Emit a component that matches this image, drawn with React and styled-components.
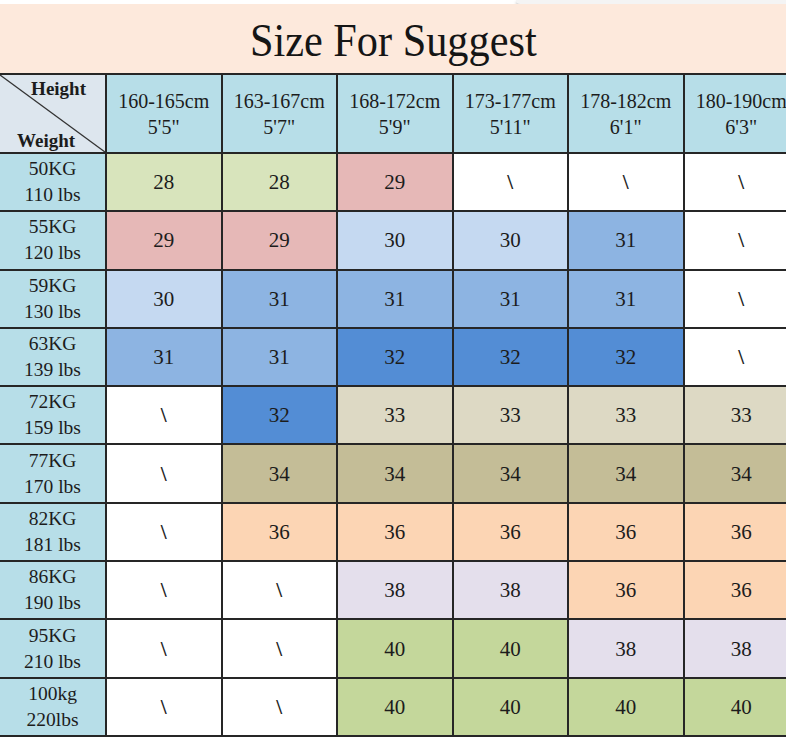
import styled, { createGlobalStyle } from "styled-components";

const SERIF = `"Liberation Serif", "Times New Roman", "DejaVu Serif", serif`;

const GlobalStyle = createGlobalStyle`
  html, body {
    margin: 0;
    padding: 0;
    background: #ffffff;
  }
  body {
    width: 786px;
    height: 743px;
    overflow: hidden;
    font-family: ${SERIF};
    color: #1c1c1c;
  }
`;

const Page = styled.div`
  width: 786px;
  height: 743px;
  overflow: hidden;
  display: flex;
  flex-direction: column;
  font-family: ${SERIF};
`;

const TopStrip = styled.div`
  height: 4px;
  display: flex;
  justify-content: flex-end;
  background: #ffffff;
`;

const PopupEdge = styled.div`
  width: 270px;
  height: 4px;
  background: #f4f4f4;
  border-bottom-left-radius: 6px;
  box-shadow: 0 2px 3px rgba(0, 0, 0, 0.25);
`;

const TitleBand = styled.div`
  height: 69px;
  background: #fde9dc;
  display: flex;
  align-items: center;
  justify-content: center;
`;

const Title = styled.h1`
  margin: 0;
  font-family: ${SERIF};
  font-weight: normal;
  font-size: 47px;
  line-height: 1;
  color: #151515;
  transform: scaleX(0.9);
  padding-top: 3px;
`;

const Table = styled.div`
  display: grid;
  grid-template-columns: 105px repeat(6, 113.5px);
  grid-template-rows: 77px repeat(10, 56.3px);
  gap: 2px;
  background: #262626;
  border-top: 2px solid #262626;
  border-bottom: 2px solid #262626;
  width: max-content;
`;

const Cell = styled.div`
  background: ${(p) => p.$bg || "#ffffff"};
  display: flex;
  flex-direction: column;
  align-items: center;
  justify-content: center;
  font-family: ${SERIF};
  font-size: ${(p) => (p.$head ? p.$head : "21px")};
  font-weight: ${(p) => (p.$empty ? "bold" : "normal")};
  line-height: 26px;
  text-align: center;
  white-space: nowrap;
  color: #1c1c1c;
`;

const Corner = styled.div`
  position: relative;
  background: #dde6ee;
  font-family: ${SERIF};
  font-weight: bold;
  font-size: 19px;
  overflow: hidden;
`;

const CornerTop = styled.span`
  position: absolute;
  top: 3px;
  right: 19px;
`;

const CornerBottom = styled.span`
  position: absolute;
  bottom: 0px;
  left: 17px;
`;

const Diagonal = styled.svg`
  position: absolute;
  inset: 0;
`;

const BottomStrip = styled.div`
  flex: 1;
  background: #ffffff;
`;

const HEADER_BG = "#b7dee8";

const sizeColors = {
  28: "#d8e4bc",
  29: "#e6b8b7",
  30: "#c5d9f1",
  31: "#8db4e2",
  32: "#538dd5",
  33: "#ddd9c4",
  34: "#c4bd97",
  36: "#fcd5b4",
  38: "#e4dfec",
  40: "#c4d79b",
};

const heights = [
  ["160-165cm", "5'5\""],
  ["163-167cm", "5'7\""],
  ["168-172cm", "5'9\""],
  ["173-177cm", "5'11\""],
  ["178-182cm", "6'1\""],
  ["180-190cm", "6'3\""],
];

const N = "\\";

const rows = [
  ["50KG", "110 lbs", [28, 28, 29, N, N, N]],
  ["55KG", "120 lbs", [29, 29, 30, 30, 31, N]],
  ["59KG", "130 lbs", [30, 31, 31, 31, 31, N]],
  ["63KG", "139 lbs", [31, 31, 32, 32, 32, N]],
  ["72KG", "159 lbs", [N, 32, 33, 33, 33, 33]],
  ["77KG", "170 lbs", [N, 34, 34, 34, 34, 34]],
  ["82KG", "181 lbs", [N, 36, 36, 36, 36, 36]],
  ["86KG", "190 lbs", [N, N, 38, 38, 36, 36]],
  ["95KG", "210 lbs", [N, N, 40, 40, 38, 38]],
  ["100kg", "220lbs", [N, N, 40, 40, 40, 40]],
];

export default function App() {
  return (
    <Page>
      <GlobalStyle />
      <TopStrip>
        <PopupEdge />
      </TopStrip>
      <TitleBand>
        <Title>Size For Suggest</Title>
      </TitleBand>
      <Table>
        <Corner>
          <Diagonal width="105" height="77" viewBox="0 0 105 77">
            <line x1="0" y1="0" x2="105" y2="77" stroke="#333" strokeWidth="1.3" />
          </Diagonal>
          <CornerTop>Height</CornerTop>
          <CornerBottom>Weight</CornerBottom>
        </Corner>
        {heights.map(([cm, ft]) => (
          <Cell key={cm} $bg={HEADER_BG} $head="20px">
            <span>{cm}</span>
            <span>{ft}</span>
          </Cell>
        ))}
        {rows.map(([kg, lbs, sizes]) => [
          <Cell key={kg} $bg={HEADER_BG} $head="19.5px">
            <span>{kg}</span>
            <span>{lbs}</span>
          </Cell>,
          ...sizes.map((s, i) => (
            <Cell key={kg + i} $bg={sizeColors[s]} $empty={s === N}>
              {s}
            </Cell>
          )),
        ])}
      </Table>
      <BottomStrip />
    </Page>
  );
}
